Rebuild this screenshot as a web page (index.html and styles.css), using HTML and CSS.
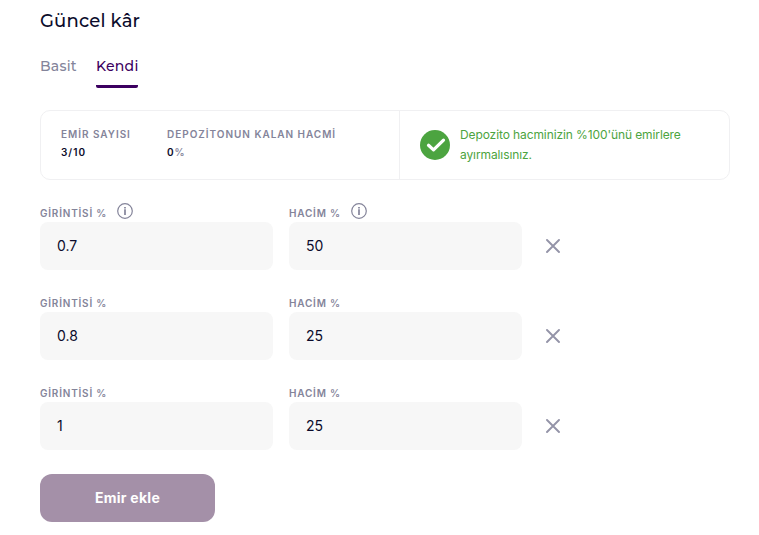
FILE: index.html
```html
<!DOCTYPE html>
<html lang="tr">
<head>
<meta charset="utf-8">
<title>Güncel kâr</title>
<link rel="stylesheet" href="styles.css">
</head>
<body>
<svg class="defs" aria-hidden="true">
  <symbol id="info" viewBox="0 0 16 16"><circle cx="8" cy="8" r="7.3" fill="none" stroke="currentColor" stroke-width="1.2"/><path d="M8 6.2V12M8 4v1.4" fill="none" stroke="currentColor" stroke-width="1.7"/></symbol>
  <symbol id="close" viewBox="0 0 14 14"><path d="M1 1l12 12M13 1L1 13" fill="none" stroke="currentColor" stroke-width="1.9" stroke-linecap="round"/></symbol>
</svg>
<main class="panel">
  <h1 class="title">Güncel kâr</h1>
  <nav class="tabs">
    <a class="tab tab-basic">Basit</a>
    <a class="tab tab-active">Kendi</a>
  </nav>
  <section class="summary">
    <div class="stats">
      <div class="stat stat-orders"><div class="caption">EMİR SAYISI</div><div class="value">3/10</div></div>
      <div class="stat"><div class="caption">DEPOZİTONUN KALAN HACMİ</div><div class="value">0<span class="unit">%</span></div></div>
    </div>
    <div class="notice">
      <svg class="check" viewBox="0 0 30 30"><circle cx="15" cy="15" r="15" fill="#4ca440"/><path d="M8.5 15.3l5 4.6 10-9.7" fill="none" stroke="#fff" stroke-width="3.2" stroke-linecap="round" stroke-linejoin="round"/></svg>
      <p class="message">Depozito hacminizin %100'ünü emirlere<br>ayırmalısınız.</p>
    </div>
  </section>
  <form class="orders">
    <div class="row">
      <div class="field"><div class="label"><span class="caption">GİRİNTİSİ %</span><svg class="info"><use href="#info"/></svg></div><div class="box">0.7</div></div>
      <div class="field"><div class="label"><span class="caption">HACİM %</span><svg class="info"><use href="#info"/></svg></div><div class="box">50</div></div>
      <svg class="close"><use href="#close"/></svg>
    </div>
    <div class="row">
      <div class="field"><div class="label"><span class="caption">GİRİNTİSİ %</span></div><div class="box">0.8</div></div>
      <div class="field"><div class="label"><span class="caption">HACİM %</span></div><div class="box">25</div></div>
      <svg class="close"><use href="#close"/></svg>
    </div>
    <div class="row">
      <div class="field"><div class="label"><span class="caption">GİRİNTİSİ %</span></div><div class="box">1</div></div>
      <div class="field"><div class="label"><span class="caption">HACİM %</span></div><div class="box">25</div></div>
      <svg class="close"><use href="#close"/></svg>
    </div>
    <button class="add" type="button">Emir ekle</button>
  </form>
</main>
</body>
</html>
```
FILE: styles.css
```css
* { box-sizing: border-box; }
body { margin: 0; background: #fff; color: #0b0b2b; font-family: Inter, "Liberation Sans", sans-serif; }
.defs { display: none; }
.panel { width: 690px; margin-left: 40px; padding-top: 9px; }
.title { margin: 0; font: 500 18px/24px Montserrat, Inter, sans-serif; letter-spacing: 0.18px; }
.tabs { display: flex; gap: 20px; height: 32px; margin-top: 23px; }
.tab { font: 500 14px/20px Montserrat, Inter, sans-serif; letter-spacing: 0.25px; color: #84849a; white-space: nowrap; }
.tab-basic { width: 36px; }
.tab-active { width: 42px; height: 32px; color: #3c0060; border-bottom: 3px solid #3c0060; border-radius: 2px; }
.summary { display: flex; height: 70px; margin-top: 22px; border: 1px solid #f0f0f2; border-radius: 10px; }
.stats { display: flex; width: 359px; padding: 15px 20px; border-right: 1px solid #f0f0f2; }
.stat-orders { width: 106px; }
.caption { font-size: 10px; line-height: 16px; font-weight: 600; letter-spacing: 0.97px; color: #84849a; white-space: nowrap; }
.value { font-size: 10px; line-height: 16px; margin-top: 2px; font-weight: 600; letter-spacing: 1px; }
.unit { color: #84849a; }
.notice { display: flex; gap: 10px; padding: 14px 20px; }
.check { width: 30px; height: 30px; margin-top: 5px; flex: none; }
.message { margin: 0; font-size: 12px; line-height: 20px; letter-spacing: -0.1px; color: #4ca440; white-space: nowrap; }
.orders { padding-top: 18px; }
.row { display: flex; gap: 16px; margin-bottom: 18px; }
.field { width: 233px; }
.label { display: flex; align-items: flex-end; gap: 10px; height: 24px; }
.label .caption { margin-bottom: 1px; letter-spacing: 0.8px; }
.info { width: 16px; height: 16px; margin-bottom: 3px; color: #84849a; }
.box { height: 48px; padding: 0 17px; font-size: 14px; line-height: 48px; background: #f7f7f7; border-radius: 8px; }
.close { width: 14px; height: 14px; margin: 41px 0 0 8px; color: #9494a8; }
.add { display: block; width: 175px; height: 48px; margin-top: 24px; border: 0; border-radius: 12px; background: #a490a8; color: #fff; font: 700 14px/48px Inter, sans-serif; letter-spacing: 0.25px; padding: 0; }
```
